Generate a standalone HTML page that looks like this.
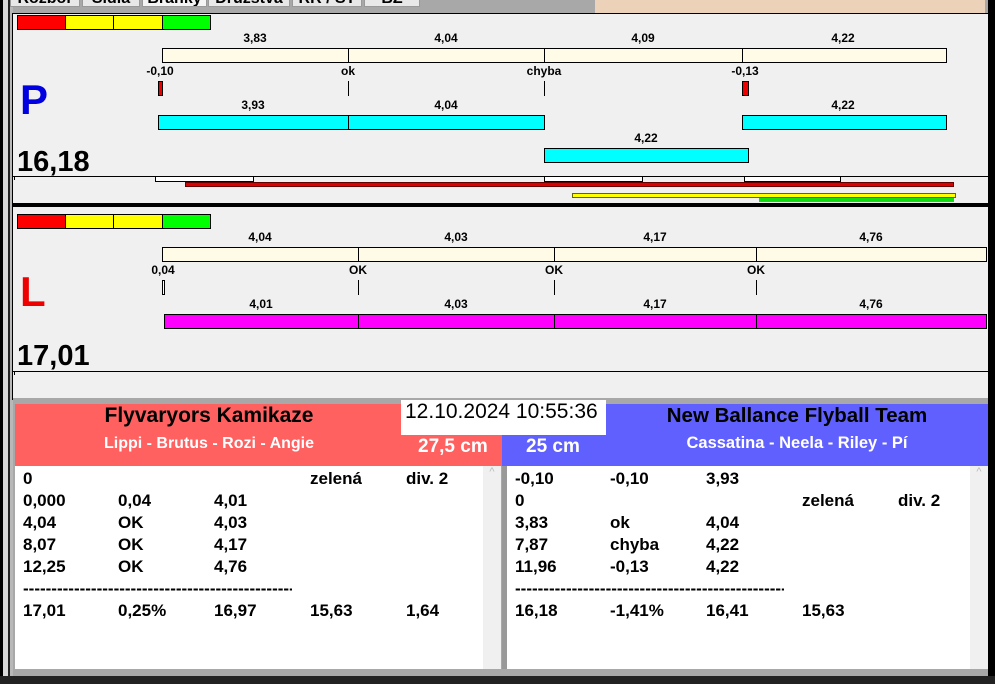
<!DOCTYPE html>
<html><head><meta charset="utf-8"><style>
*{margin:0;padding:0;box-sizing:border-box}
body{width:995px;height:684px;position:relative;overflow:hidden;background:#f0f0f0;font-family:"Liberation Sans",sans-serif}
div{position:absolute}
.t{font-weight:bold;font-size:12px;color:#000;transform:translateX(-50%);white-space:nowrap;line-height:12px}
.b{border:1px solid #000}
.v{width:1px;background:#000}
.r{font-weight:bold;font-size:17px;line-height:22px;white-space:pre;color:#000}
.tab{top:-10px;height:17px;background:#e8e8e8;border:1px solid #999;font-size:16px;font-weight:bold;text-align:center;line-height:16px;overflow:hidden}
</style></head><body>
<div style="left:0;top:0;width:3px;height:684px;background:#000"></div>
<div style="left:3px;top:0;width:5px;height:684px;background:#d8d8d8"></div>
<div style="left:8px;top:0;width:2px;height:684px;background:#222"></div>
<div style="left:10px;top:0;width:3px;height:684px;background:#b8b8b8"></div>
<div style="left:13px;top:0;width:982px;height:13px;background:#a8a8a8"></div>
<div style="left:595px;top:0;width:390px;height:13px;background:#ecd2b8"></div>
<div class="tab" style="left:10px;width:70px">Rozbor</div>
<div class="tab" style="left:82px;width:58px">Sídla</div>
<div class="tab" style="left:142px;width:65px;background:#f4f4f4">Branky</div>
<div class="tab" style="left:208px;width:82px">Družstva</div>
<div class="tab" style="left:292px;width:70px">RR / ST</div>
<div class="tab" style="left:364px;width:56px">BZ</div>
<div style="left:988px;top:0;width:7px;height:684px;background:#000"></div>
<!-- P panel -->
<div style="left:12px;top:13px;width:978px;height:1px;background:#000"></div>
<div style="left:12px;top:13px;width:1px;height:387px;background:#000"></div>
<div class="b" style="left:17px;top:15px;width:49px;height:15px;background:#f00"></div>
<div class="b" style="left:65px;top:15px;width:49px;height:15px;background:#ff0"></div>
<div class="b" style="left:113px;top:15px;width:50px;height:15px;background:#ff0"></div>
<div class="b" style="left:162px;top:15px;width:49px;height:15px;background:#0f0"></div>
<div class="t" style="left:255px;top:32px">3,83</div>
<div class="t" style="left:446px;top:32px">4,04</div>
<div class="t" style="left:643px;top:32px">4,09</div>
<div class="t" style="left:843px;top:32px">4,22</div>
<div class="b" style="left:162px;top:48px;width:785px;height:15px;background:#fffbe6"></div>
<div class="v" style="left:348px;top:48px;height:15px"></div>
<div class="v" style="left:544px;top:48px;height:15px"></div>
<div class="v" style="left:742px;top:48px;height:15px"></div>
<div class="t" style="left:160px;top:65px">-0,10</div>
<div class="t" style="left:348px;top:65px">ok</div>
<div class="t" style="left:544px;top:65px">chyba</div>
<div class="t" style="left:745px;top:65px">-0,13</div>
<div class="b" style="left:158px;top:81px;width:5px;height:15px;background:#e00"></div>
<div class="v" style="left:348px;top:81px;height:15px"></div>
<div class="v" style="left:544px;top:81px;height:15px"></div>
<div class="b" style="left:742px;top:81px;width:7px;height:15px;background:#e00"></div>
<div class="t" style="left:253px;top:99px">3,93</div>
<div class="t" style="left:446px;top:99px">4,04</div>
<div class="t" style="left:843px;top:99px">4,22</div>
<div class="b" style="left:158px;top:115px;width:387px;height:15px;background:#0ff"></div>
<div class="v" style="left:348px;top:115px;height:15px"></div>
<div class="b" style="left:742px;top:115px;width:205px;height:15px;background:#0ff"></div>
<div class="t" style="left:646px;top:132px">4,22</div>
<div class="b" style="left:544px;top:148px;width:205px;height:15px;background:#0ff"></div>
<div style="left:20px;top:76px;font-size:42px;font-weight:bold;color:#0000e0;line-height:48px">P</div>
<div style="left:17px;top:146px;font-size:29px;font-weight:bold;line-height:32px">16,18</div>
<div style="left:13px;top:176px;width:977px;height:1px;background:#000"></div>
<div class="v" style="left:14px;top:176px;height:4px"></div>
<div class="b" style="left:155px;top:176px;width:99px;height:6px;background:#fff"></div>
<div class="b" style="left:544px;top:176px;width:99px;height:6px;background:#fff"></div>
<div class="b" style="left:744px;top:176px;width:97px;height:6px;background:#fff"></div>
<div style="left:185px;top:182px;width:769px;height:5px;background:#d00;border:1px solid #600"></div>
<div style="left:572px;top:193px;width:384px;height:5px;background:#ff0;border:1px solid #660"></div>
<div style="left:759px;top:198px;width:195px;height:4px;background:#1d1"></div>
<div style="left:12px;top:203px;width:978px;height:4px;background:#000"></div>
<!-- L panel -->
<div class="b" style="left:17px;top:214px;width:49px;height:15px;background:#f00"></div>
<div class="b" style="left:65px;top:214px;width:49px;height:15px;background:#ff0"></div>
<div class="b" style="left:113px;top:214px;width:50px;height:15px;background:#ff0"></div>
<div class="b" style="left:162px;top:214px;width:49px;height:15px;background:#0f0"></div>
<div class="t" style="left:260px;top:231px">4,04</div>
<div class="t" style="left:456px;top:231px">4,03</div>
<div class="t" style="left:655px;top:231px">4,17</div>
<div class="t" style="left:871px;top:231px">4,76</div>
<div class="b" style="left:162px;top:247px;width:825px;height:15px;background:#fffbe6"></div>
<div class="v" style="left:358px;top:247px;height:15px"></div>
<div class="v" style="left:554px;top:247px;height:15px"></div>
<div class="v" style="left:756px;top:247px;height:15px"></div>
<div class="t" style="left:163px;top:264px">0,04</div>
<div class="t" style="left:358px;top:264px">OK</div>
<div class="t" style="left:554px;top:264px">OK</div>
<div class="t" style="left:756px;top:264px">OK</div>
<div class="b" style="left:162px;top:280px;width:3px;height:15px;background:#fff"></div>
<div class="v" style="left:358px;top:280px;height:15px"></div>
<div class="v" style="left:554px;top:280px;height:15px"></div>
<div class="v" style="left:756px;top:280px;height:15px"></div>
<div class="t" style="left:261px;top:298px">4,01</div>
<div class="t" style="left:456px;top:298px">4,03</div>
<div class="t" style="left:655px;top:298px">4,17</div>
<div class="t" style="left:871px;top:298px">4,76</div>
<div class="b" style="left:164px;top:314px;width:823px;height:15px;background:#f0f"></div>
<div class="v" style="left:358px;top:314px;height:15px"></div>
<div class="v" style="left:554px;top:314px;height:15px"></div>
<div class="v" style="left:756px;top:314px;height:15px"></div>
<div style="left:20px;top:268px;font-size:42px;font-weight:bold;color:#e00;line-height:48px">L</div>
<div style="left:17px;top:340px;font-size:29px;font-weight:bold;line-height:32px">17,01</div>
<div style="left:13px;top:371px;width:977px;height:1px;background:#000"></div>
<div class="v" style="left:14px;top:371px;height:4px"></div>
<!-- bottom -->
<div style="left:13px;top:398px;width:975px;height:286px;background:#a8a8a8"></div>
<div style="left:15px;top:404px;width:487px;height:62px;background:#ff6060"></div>
<div style="left:502px;top:404px;width:486px;height:62px;background:#6060ff"></div>
<div style="left:15px;top:404px;width:388px;text-align:center;font-size:21px;font-weight:bold;line-height:24px">Flyvaryors Kamikaze</div>
<div style="left:15px;top:434px;width:388px;text-align:center;font-size:16px;font-weight:bold;color:#fff;line-height:19px">Lippi - Brutus - Rozi - Angie</div>
<div style="left:418px;top:435px;font-size:19px;font-weight:bold;color:#fff;line-height:24px">27,5 cm</div>
<div style="left:526px;top:435px;font-size:19px;font-weight:bold;color:#fff;line-height:24px">25 cm</div>
<div style="left:606px;top:404px;width:382px;text-align:center;font-size:20.5px;font-weight:bold;line-height:24px">New Ballance Flyball Team</div>
<div style="left:606px;top:434px;width:382px;text-align:center;font-size:16.5px;font-weight:bold;color:#fff;line-height:19px">Cassatina - Neela - Riley - Pí</div>
<div style="left:401px;top:400px;width:205px;height:35px;background:#fff;font-size:21px;line-height:24px;padding-left:4px;white-space:nowrap">12.10.2024 10:55:36</div>
<div style="left:15px;top:466px;width:486px;height:203px;background:#fff"></div>
<div style="left:483px;top:466px;width:18px;height:203px;background:#f0f0f0;color:#bbb;font-size:11px;text-align:center">^</div>
<div style="left:507px;top:466px;width:481px;height:203px;background:#fff"></div>
<div style="left:970px;top:466px;width:18px;height:203px;background:#f0f0f0;color:#bbb;font-size:11px;text-align:center">^</div>
<div style="left:502px;top:466px;width:5px;height:203px;background:#999"></div>

<div class="r" style="left:23px;top:468px">0</div><div class="r" style="left:310px;top:468px">zelená</div><div class="r" style="left:406px;top:468px">div. 2</div>
<div class="r" style="left:23px;top:490px">0,000</div><div class="r" style="left:118px;top:490px">0,04</div><div class="r" style="left:214px;top:490px">4,01</div>
<div class="r" style="left:23px;top:512px">4,04</div><div class="r" style="left:118px;top:512px">OK</div><div class="r" style="left:214px;top:512px">4,03</div>
<div class="r" style="left:23px;top:534px">8,07</div><div class="r" style="left:118px;top:534px">OK</div><div class="r" style="left:214px;top:534px">4,17</div>
<div class="r" style="left:23px;top:556px">12,25</div><div class="r" style="left:118px;top:556px">OK</div><div class="r" style="left:214px;top:556px">4,76</div>
<div class="r" style="left:23px;top:578px;width:269px;overflow:hidden">------------------------------------------------------</div>
<div class="r" style="left:23px;top:600px">17,01</div><div class="r" style="left:118px;top:600px">0,25%</div><div class="r" style="left:214px;top:600px">16,97</div><div class="r" style="left:310px;top:600px">15,63</div><div class="r" style="left:406px;top:600px">1,64</div>

<div class="r" style="left:515px;top:468px">-0,10</div><div class="r" style="left:610px;top:468px">-0,10</div><div class="r" style="left:706px;top:468px">3,93</div>
<div class="r" style="left:515px;top:490px">0</div><div class="r" style="left:802px;top:490px">zelená</div><div class="r" style="left:898px;top:490px">div. 2</div>
<div class="r" style="left:515px;top:512px">3,83</div><div class="r" style="left:610px;top:512px">ok</div><div class="r" style="left:706px;top:512px">4,04</div>
<div class="r" style="left:515px;top:534px">7,87</div><div class="r" style="left:610px;top:534px">chyba</div><div class="r" style="left:706px;top:534px">4,22</div>
<div class="r" style="left:515px;top:556px">11,96</div><div class="r" style="left:610px;top:556px">-0,13</div><div class="r" style="left:706px;top:556px">4,22</div>
<div class="r" style="left:515px;top:578px;width:269px;overflow:hidden">------------------------------------------------------</div>
<div class="r" style="left:515px;top:600px">16,18</div><div class="r" style="left:610px;top:600px">-1,41%</div><div class="r" style="left:706px;top:600px">16,41</div><div class="r" style="left:802px;top:600px">15,63</div>

<div style="left:0;top:676px;width:995px;height:8px;background:#222"></div>
<div style="left:13px;top:669px;width:975px;height:7px;background:#a8a8a8"></div>
</body></html>
